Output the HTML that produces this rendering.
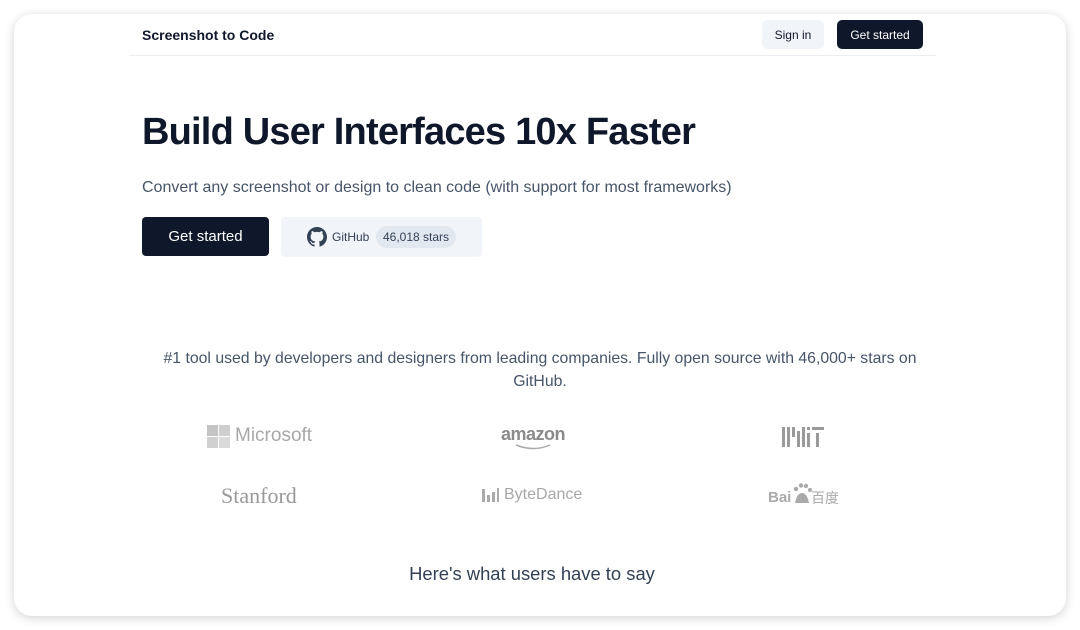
<!DOCTYPE html>
<html><head><meta charset="utf-8"><style>
*{box-sizing:border-box;margin:0;padding:0}
body{width:1080px;height:630px;background:#fff;font-family:"Liberation Sans",sans-serif;overflow:hidden;position:relative}
.card{position:absolute;left:14px;top:14px;width:1052px;height:602px;background:#fff;border-radius:18px;box-shadow:0 2px 10px rgba(0,0,0,.18);overflow:hidden}
.nav{position:absolute;left:115px;top:0;width:807px;height:42px;border-bottom:1px solid #eceef1}
.logo{position:absolute;left:13px;top:13px;font-size:14px;font-weight:bold;color:#0f172a}
.btn{position:absolute;top:6px;height:29px;border-radius:5px;font-size:12px;line-height:30px;text-align:center}
.signin{left:633px;width:62px;background:#f1f5f9;color:#0f172a}
.gs{left:708px;width:86px;background:#0f172a;color:#fff}
h1{position:absolute;left:128px;top:97px;font-size:38px;font-weight:bold;color:#0f172a;letter-spacing:-0.8px}
.sub{position:absolute;left:128px;top:165px;font-size:16px;color:#475569}
.b1{position:absolute;left:128px;top:203px;width:127px;height:39px;background:#0f172a;color:#fff;border-radius:4px;font-size:15px;line-height:40px;text-align:center}
.b2{position:absolute;left:267px;top:203px;width:201px;height:40px;background:#f1f5f9;border-radius:4px}
.b2 svg{position:absolute;left:26px;top:10px}
.b2 .gh{position:absolute;left:51px;top:13px;font-size:12px;color:#334155}
.b2 .st{position:absolute;left:95px;top:9px;height:22px;width:80px;border-radius:11px;background:#e2e8f0;font-size:12px;line-height:22px;text-align:center;color:#334155}
.p{position:absolute;left:128px;width:796px;top:333px;text-align:center;font-size:15.8px;line-height:23px;color:#475569}
.l{position:absolute;color:#9a9a9a}
.say{position:absolute;left:0;width:1036px;top:549px;text-align:center;font-size:18.4px;color:#334155}
</style></head><body>
<div class="card">
<div class="nav"><div class="logo">Screenshot to Code</div>
<div class="btn signin">Sign in</div><div class="btn gs">Get started</div></div>
<h1>Build User Interfaces 10x Faster</h1>
<div class="sub">Convert any screenshot or design to clean code (with support for most frameworks)</div>
<div class="b1">Get started</div>
<div class="b2"><svg width="20" height="20" viewBox="0 0 16 16"><path fill="#334155" d="M8 0C3.58 0 0 3.580 0 8c0 3.54 2.29 6.530 5.47 7.59.4.07.55-.17.55-.38v-1.330c-2.230.48-2.7-1.070-2.7-1.070-.36-.92-.89-1.170-.89-1.170-.73-.5.05-.49.05-.49.8.06 1.230.83 1.230.83.71 1.220 1.870.87 2.330.66.07-.52.28-.87.51-1.070-1.780-.2-3.640-.89-3.640-3.950 0-.87.31-1.590.82-2.150-.08-.2-.36-1.020.08-2.120 0 0 .67-.21 2.200.82a7.6 7.600 0 0 1 4 0c1.530-1.040 2.200-.82 2.200-.82.44 1.100.16 1.920.08 2.120.51.56.82 1.270.82 2.150 0 3.070-1.870 3.750-3.650 3.950.29.25.54.73.54 1.480v2.200c0 .21.15.46.55.38A8 8 0 0 0 16 8c0-4.420-3.580-8-8-8z"/></svg><span class="gh">GitHub</span><span class="st">46,018 stars</span></div>
<div class="p">#1 tool used by developers and designers from leading companies. Fully open source with 46,000+ stars on GitHub.</div>
<div class="l" style="left:193px;top:411px"><svg width="23" height="23"><rect x="0" y="0" width="11" height="11" fill="#c4c4c4"/><rect x="12" y="0" width="11" height="11" fill="#cfcfcf"/><rect x="0" y="12" width="11" height="11" fill="#d0d0d0"/><rect x="12" y="12" width="11" height="11" fill="#dadada"/></svg></div>
<div class="l" style="left:221px;top:411px;font-size:19px;color:#a8a8a8">Microsoft</div>
<div class="l" style="left:487px;top:410px;font-size:18px;font-weight:bold;color:#8a8a8a;letter-spacing:-0.5px">amazon</div>
<svg class="l" style="left:500px;top:429px" width="40" height="8"><path d="M2 2 Q20 9 36 2" stroke="#aaa" stroke-width="1.5" fill="none"/></svg>
<div class="l" style="left:768px;top:413px"><svg width="42" height="20"><g fill="#9a9a9a"><rect x="0" y="0" width="3" height="20"/><rect x="5" y="0" width="3" height="20"/><rect x="10" y="0" width="3" height="10"/><rect x="15" y="4" width="3" height="16"/><rect x="20" y="0" width="3" height="20"/><rect x="25" y="6" width="3" height="14"/><rect x="25" y="0" width="3" height="3"/><rect x="30" y="0" width="12" height="3"/><rect x="34" y="6" width="3" height="14"/></g></svg></div>
<div class="l" style="left:207px;top:469px;font-family:'Liberation Serif',serif;font-size:22px;color:#999">Stanford</div>
<div class="l" style="left:468px;top:474px"><svg width="18" height="14"><g fill="#aaa"><rect x="0" y="1" width="3" height="13"/><rect x="5" y="7" width="3" height="7"/><rect x="10" y="4" width="3" height="10"/><rect x="15" y="0" width="2" height="14"/></g></svg></div>
<div class="l" style="left:490px;top:472px;font-size:16px;color:#a8a8a8">ByteDance</div>
<div class="l" style="left:754px;top:475px;font-size:15px;font-weight:bold;color:#aaa">Bai</div>
<div class="l" style="left:778px;top:469px;width:20px;height:22px"><svg width="20" height="22"><g fill="#aaa"><circle cx="4" cy="6" r="2.2"/><circle cx="9" cy="2.5" r="2.2"/><circle cx="14" cy="3" r="2.2"/><circle cx="18" cy="7" r="2"/><path d="M3 20 Q5 10 10 10 Q15 10 17 20 Z"/></g></svg></div>
<div class="l" style="left:797px;top:474px;font-size:14px;color:#aaa;font-family:'Liberation Sans','Noto Sans CJK SC',sans-serif">百度</div>
<div class="say">Here's what users have to say</div>
</div>
</body></html>
